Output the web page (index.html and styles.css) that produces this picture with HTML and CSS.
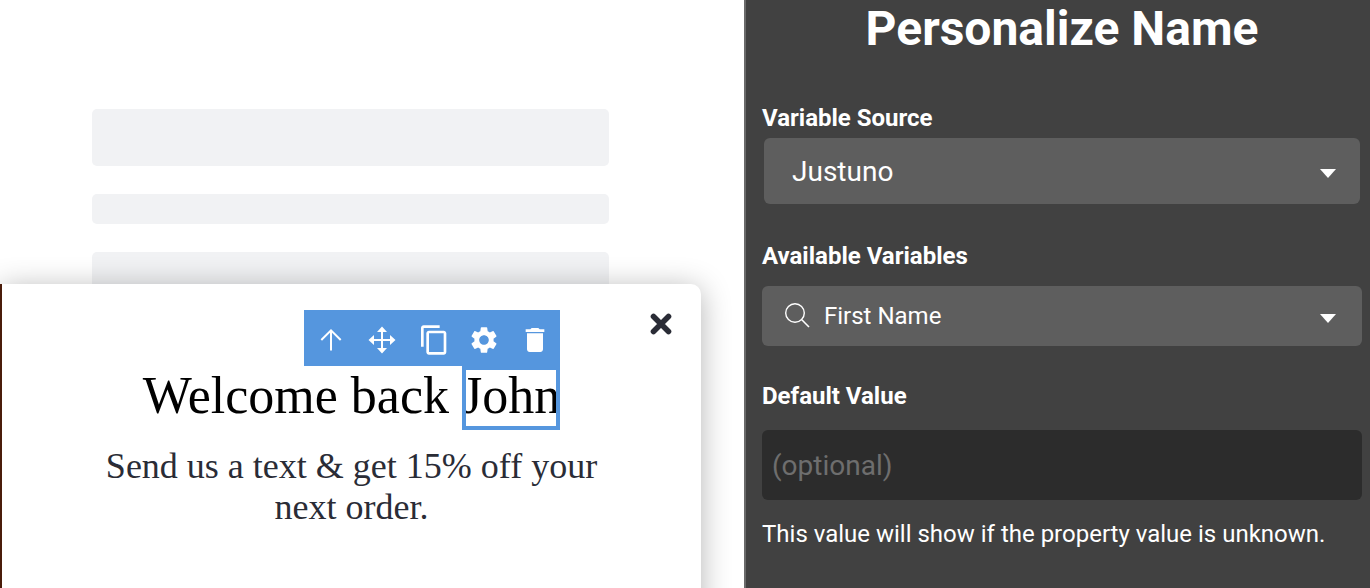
FILE: index.html
```html
<!DOCTYPE html>
<html lang="en">
<head>
<meta charset="utf-8">
<title>Personalize Name</title>
<link rel="stylesheet" href="styles.css">
</head>
<body>
<div class="app">
  <main class="canvas">
    <div class="placeholders">
      <div class="ph ph-a"></div>
      <div class="ph ph-b"></div>
      <div class="ph ph-c"></div>
    </div>
    <section class="popup">
      <button class="close" aria-label="Close">
        <svg width="24" height="24" viewBox="0 0 24 24"><path d="M4.500 4.500 19.500 19.500M19.500 4.500 4.500 19.500" stroke="#2a2c36" stroke-width="5.600" stroke-linecap="round" fill="none"/></svg>
      </button>
      <div class="toolbar">
        <svg width="24" height="24" viewBox="0 0 24 24"><path d="M12 22.500V2.500M2.300 12 12 2.300 21.700 12" stroke="#fff" stroke-width="2" fill="none"/></svg>
        <svg width="28" height="28" viewBox="0 0 28 28"><path d="M14 4V24M4 14H24" stroke="#fff" stroke-width="2" fill="none"/><path fill="#fff" d="M14 .5 19 6H9zM14 27.500 9 22H19zM.5 14 6 9V19zM27.500 14 22 19V9z"/></svg>
        <svg width="32" height="32" viewBox="-1 0 24 24"><path fill="#fff" d="M16 1H4c-1.100 0-2 .9-2 2v14h2V3h12V1zm3 4H8c-1.100 0-2 .9-2 2v14c0 1.100.9 2 2 2h11c1.100 0 2-.9 2-2V7c0-1.100-.9-2-2-2zm0 16H8V7h11v14z"/></svg>
        <svg width="32" height="32" viewBox="0 0 24 24"><path fill="#fff" d="M19.140 12.940c.04-.3.06-.61.06-.94 0-.32-.02-.64-.07-.94l2.030-1.580a.49.49 0 0 0 .12-.61l-1.920-3.320a.488.488 0 0 0-.59-.22l-2.390.96c-.5-.38-1.030-.7-1.620-.94l-.36-2.540a.484.484 0 0 0-.48-.41h-3.840c-.24 0-.43.17-.47.41l-.36 2.540c-.59.24-1.130.57-1.620.94l-2.390-.96c-.22-.08-.47 0-.59.22L2.740 8.870c-.12.21-.08.47.12.61l2.030 1.580c-.05.3-.09.63-.09.94s.02.64.07.94l-2.030 1.580a.49.49 0 0 0-.12.61l1.920 3.320c.12.22.37.29.59.22l2.390-.96c.5.38 1.030.7 1.620.94l.36 2.540c.05.24.24.41.48.41h3.840c.24 0 .44-.17.47-.41l.36-2.540c.59-.24 1.130-.56 1.620-.94l2.390.96c.22.08.47 0 .59-.22l1.920-3.320c.12-.22.07-.47-.12-.61l-2.010-1.580zM12 15.600c-1.980 0-3.600-1.620-3.600-3.600s1.620-3.600 3.600-3.600 3.600 1.620 3.600 3.600-1.620 3.600-3.600 3.600z"/></svg>
        <svg width="32" height="32" viewBox="0 0 24 24"><path fill="#fff" d="M6 19c0 1.100.9 2 2 2h8c1.100 0 2-.9 2-2V7H6v12zM19 4h-3.500l-1-1h-5l-1 1H5v2h14V4z"/></svg>
      </div>
      <h1 class="headline">Welcome back <span class="token">John</span></h1>
      <p class="sub">Send us a text &amp; get 15% off your next order.</p>
    </section>
  </main>
  <aside class="panel">
    <h2 class="title">Personalize Name</h2>
    <div class="field field-source">
      <label class="label">Variable Source</label>
      <div class="select select-lg">
        <span class="value-lg">Justuno</span>
        <i class="caret"></i>
      </div>
    </div>
    <div class="field field-vars">
      <label class="label">Available Variables</label>
      <div class="select select-sm">
        <svg class="search" width="26" height="26" viewBox="0 0 26 26"><circle cx="11" cy="10" r="9.300" stroke="#fff" stroke-width="1.400" fill="none"/><path d="M17.800 16.800 25 24" stroke="#fff" stroke-width="1.600"/></svg>
        <span>First Name</span>
        <i class="caret"></i>
      </div>
    </div>
    <div class="field field-default">
      <label class="label">Default Value</label>
      <div class="input">(optional)</div>
    </div>
    <p class="hint">This value will show if the property value is unknown.</p>
  </aside>
</div>
</body>
</html>
```
FILE: styles.css
```css
* { box-sizing: border-box; }
html, body { margin: 0; height: 100%; }
body { overflow: hidden; background: #fff; font-family: Roboto, sans-serif; }
.app { display: flex; width: 1370px; height: 588px; overflow: hidden; }
.canvas { width: 744px; flex: none; position: relative; background: #fff; overflow: hidden; }
.placeholders { display: flex; flex-direction: column; gap: 28px; padding: 109px 135px 0 92px; }
.ph { background: #f1f2f4; border-radius: 5px; }
.ph-a { height: 57px; }
.ph-b { height: 30px; }
.ph-c { height: 40px; }
.popup { position: absolute; left: 0; top: 284px; width: 701px; height: 340px; background: #fff; border-radius: 0 10px 0 0; border-left: 2px solid #4a1c0a; box-shadow: 0 4px 30px rgba(0,0,0,.3); padding-top: 82px; text-align: center; }
.close { position: absolute; left: 647px; top: 28px; width: 24px; height: 24px; padding: 0; border: 0; background: none; display: flex; }
.toolbar { position: absolute; left: 302px; top: 26px; width: 256px; height: 56px; background: #5596de; display: grid; grid-template-columns: repeat(5, 51px); justify-items: center; align-items: center; padding: 4px 0 0 1px; }
.headline { margin: 0; font: 400 52px/60px "Liberation Serif", serif; color: #000; }
.token { display: inline-block; height: 64px; outline: 4px solid #5596de; outline-offset: -4px; vertical-align: top; }
.sub { margin: 16px auto 0; width: 520px; font: 400 36px/41px "Liberation Serif", serif; color: #2a2c36; }
.panel { flex: 1; background: #414141; border-left: 2px solid #6a6a6a; color: #fff; padding: 0 8px 0 16px; display: flex; flex-direction: column; }
.title { margin: 2px 0 0; text-align: center; font: 700 48px/54px Roboto, sans-serif; }
.label { display: block; font: 700 24px/28px Roboto, sans-serif; }
.field-source { margin-top: 48px; }
.field-vars { margin-top: 38px; }
.field-default { margin-top: 36px; }
.select { display: flex; align-items: center; background: #5e5e5e; border-radius: 6px; position: relative; }
.select-lg { margin: 6px 2px 0 2px; height: 66px; padding-left: 28px; font: 400 28px/34px Roboto, sans-serif; }
.value-lg { padding-top: 1px; }
.select-sm { margin-top: 16px; height: 60px; padding-left: 22px; font: 400 24px/28px Roboto, sans-serif; }
.select-lg .caret { right: 24px; }
.select-sm .caret { right: 26px; }
.search { margin-right: 14px; }
.caret { position: absolute; top: 50%; margin-top: -2px; border-left: 8.500px solid transparent; border-right: 8.500px solid transparent; border-top: 9px solid #fff; }
.input { margin-top: 20px; height: 70px; border-radius: 6px; background: #2c2c2c; color: #6e6e6e; font: 400 28px/72px Roboto, sans-serif; padding-left: 10px; }
.hint { margin: 20px 0 0; font: 400 24px/28px Roboto, sans-serif; }
```
